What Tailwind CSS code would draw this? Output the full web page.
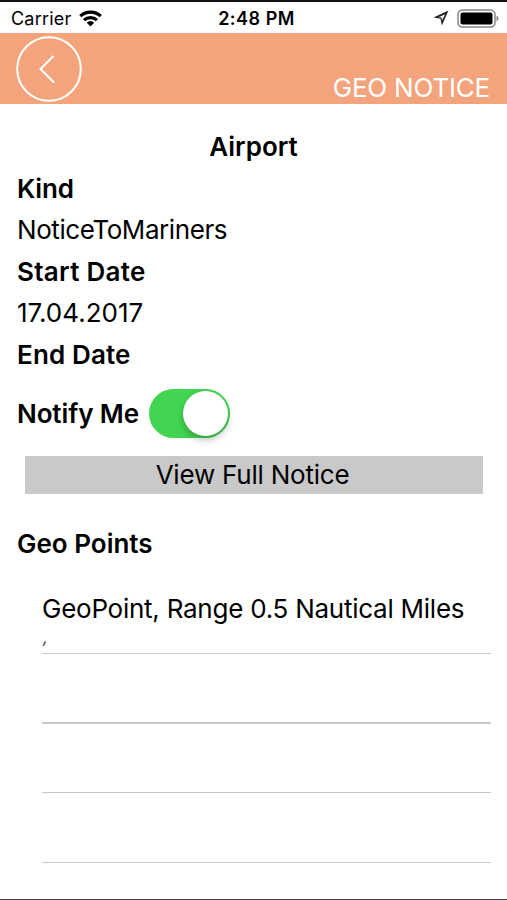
<!DOCTYPE html>
<html lang="en">
<head>
<meta charset="utf-8">
<title>Geo Notice</title>
<script src="https://cdn.jsdelivr.net/npm/@tailwindcss/browser@4"></script>
</head>
<body class="bg-white">
<div class="flex flex-col w-[507px] h-[900px] overflow-hidden bg-white border-t-2 border-[#111] border-b border-b-[#444] font-['Inter',sans-serif] text-black text-[26px] whitespace-nowrap">
  <div class="grid grid-cols-3 items-center h-[31px] shrink-0 pl-[11px] pr-[8px]">
    <div class="flex items-center gap-[8px]">
      <span class="text-[18px] leading-[31px] pt-px tracking-[0.2px]">Carrier</span>
      <svg class="w-[23px] h-[17px]" viewBox="0 0 23 17" fill="none" stroke="#000" stroke-width="3.200">
        <path d="M1.3 6.2C7 .8 16 .8 21.700 6.200"/>
        <path d="M5 10.200C8.700 6.700 14.300 6.700 18 10.200"/>
        <path d="M7.800 12.700Q11.500 9.500 15.200 12.700L11.500 16.500Z" fill="#000" stroke="none"/>
      </svg>
    </div>
    <span class="text-center text-[18px] font-semibold leading-[31px] pt-px pl-[3px] tracking-[0.500px]">2:48 PM</span>
    <div class="flex items-center justify-end gap-[8px]">
      <svg class="w-[16px] h-[16px]" viewBox="0 0 16 16">
        <path fill="#222" fill-rule="evenodd" d="M15.500 0.500L.500 7.500L7.500 8.700L8.800 15.500ZM12.200 4.200L9 10.200L8.500 7.600L5.500 7.200Z"/>
      </svg>
      <svg class="w-[42px] h-[19px]" viewBox="0 0 42 19">
        <rect x="1" y="1" width="37" height="17" rx="4.500" fill="none" stroke="#888" stroke-width="1.500"/>
        <rect x="3.500" y="3.500" width="32" height="12" rx="2" fill="#000"/>
        <path d="M39.500 6.500Q41.500 7.500 41.500 9.500T39.500 12.500Z" fill="#888"/>
      </svg>
    </div>
  </div>

  <header class="flex justify-between h-[71px] shrink-0 bg-[#f4a47c] pl-4 pr-[17px] pt-[3px] text-white">
    <svg class="w-[66px] h-[66px]" viewBox="0 0 66 66" fill="none" stroke="#fff" stroke-width="2">
      <circle cx="33" cy="33" r="31.800"/>
      <path d="M37.500 20L24.500 33L38 46.500"/>
    </svg>
    <h1 class="self-end text-[26px] leading-[32px] tracking-[-0.2px]">GEO NOTICE</h1>
  </header>

  <main class="flex flex-col pt-[22px]">
    <div class="flex flex-col px-[17px] leading-[41.500px]">
      <h2 class="text-center font-semibold">Airport</h2>
      <span class="font-semibold tracking-[-0.2px]">Kind</span>
      <span class="tracking-[-0.43px]">NoticeToMariners</span>
      <span class="font-semibold tracking-[0.3px]">Start Date</span>
      <span>17.04.2017</span>
      <span class="font-semibold tracking-[0.15px]">End Date</span>
    </div>
    <div class="flex items-center h-[50px] mt-[13.600px] pl-[17px] gap-[10px]">
      <span class="font-semibold tracking-[-0.1px]">Notify Me</span>
      <div class="flex items-center justify-end w-[81px] h-[49px] rounded-full bg-[#43d551] pr-[2px] shrink-0">
        <div class="size-[45px] rounded-full bg-white shadow-[0_4px_7px_rgba(0,0,0,0.25)]"></div>
      </div>
    </div>
    <button class="mt-[17px] ml-[25px] mr-6 h-[38px] bg-[#c9c9c9] text-center leading-[38px] pr-[3px] tracking-[-0.22px]">View Full Notice</button>
    <h3 class="mt-[29px] pl-[17px] font-semibold leading-[42px]">Geo Points</h3>
    <div class="mt-[20px] ml-[42px] mr-4">
      <div class="h-[69px] border-b border-[#c8c8c8]">
        <div class="pt-[8px] leading-[32px] tracking-[-0.25px]">GeoPoint, Range 0.5 Nautical Miles</div>
        <div class="mt-[3px] pl-px text-[16px] leading-[18px] italic font-medium text-[#4a4a6a]">,</div>
      </div>
      <div class="h-[70px] border-b-2 border-[#c8c8c8]"></div>
      <div class="h-[69px] border-b border-[#c8c8c8]"></div>
      <div class="h-[70px] border-b border-[#c8c8c8]"></div>
    </div>
  </main>
</div>
</body>
</html>
